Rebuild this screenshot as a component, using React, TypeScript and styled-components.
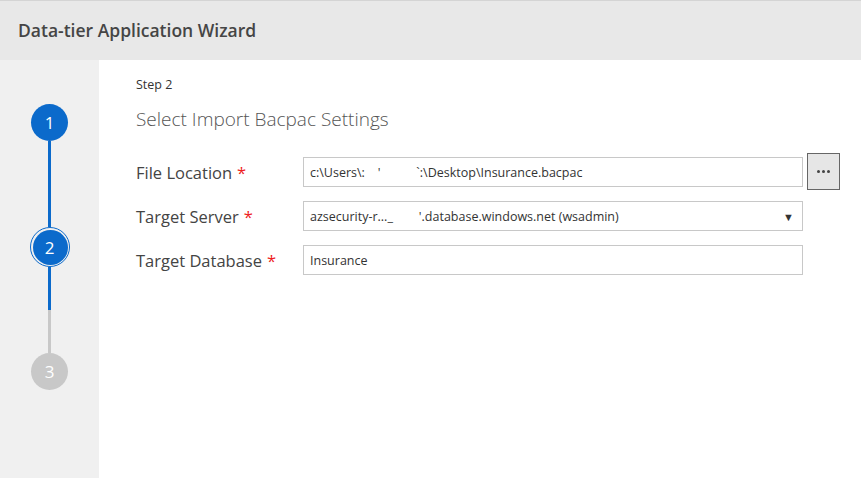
import React from "react";
import styled, { createGlobalStyle } from "styled-components";

const GlobalStyle = createGlobalStyle`
  html, body { margin: 0; padding: 0; background: #ffffff; }
  body { font-family: "Open Sans", "Noto Sans", sans-serif; }
  * { box-sizing: border-box; }
`;

const BLUE = "#0b6acb";
const GREY = "#c8c8c8";

const Page = styled.div`
  width: 861px;
  height: 478px;
  display: flex;
  flex-direction: column;
  background: #ffffff;
  overflow: hidden;
`;

const Header = styled.header`
  height: 60px;
  flex: none;
  border-top: 1px solid #d4d4d4;
  background: #e8e8e8;
  display: flex;
  align-items: center;
  padding: 0 0 1px 18px;
  font-size: 17.5px;
  font-weight: 600;
  color: #454545;
`;

const Body = styled.div`
  flex: 1;
  display: flex;
  min-height: 0;
`;

const Sidebar = styled.nav`
  width: 99px;
  flex: none;
  background: #f0f0f0;
  display: flex;
  flex-direction: column;
  align-items: center;
  padding-top: 44px;
`;

const Circle = styled.div<{ $state: "done" | "active" | "todo" }>`
  flex: none;
  width: ${(p) => (p.$state === "active" ? 40 : 37)}px;
  height: ${(p) => (p.$state === "active" ? 40 : 37)}px;
  border-radius: 50%;
  display: flex;
  align-items: center;
  justify-content: center;
  color: #ffffff;
  font-size: 17px;
  background: ${(p) => (p.$state === "todo" ? GREY : BLUE)};
  ${(p) =>
    p.$state === "active" &&
    `
    border: 1px solid ${BLUE};
    padding: 1.5px;
    background-clip: content-box;
  `}
`;

const Connector = styled.div<{ $h: number; $on: boolean }>`
  flex: none;
  width: 3px;
  height: ${(p) => p.$h}px;
  background: ${(p) => (p.$on ? BLUE : GREY)};
`;

const Main = styled.main`
  flex: 1;
  padding: 16px 0 0 37px;
  display: flex;
  flex-direction: column;
`;

const StepLabel = styled.div`
  font-size: 12.5px;
  line-height: 18px;
  color: #333333;
`;

const Title = styled.h1`
  margin: 12px 0 0;
  font-size: 19px;
  line-height: 26px;
  font-weight: 300;
  color: #555555;
`;

const Form = styled.div`
  margin-top: 25px;
  display: grid;
  grid-template-columns: 167px 500px auto;
  grid-auto-rows: 30px;
  row-gap: 14px;
  align-items: center;
`;

const Label = styled.label`
  font-size: 16.5px;
  color: #444444;
  white-space: nowrap;
`;

const Required = styled.span`
  color: #ee1c1c;
  margin-left: 5px;
`;

const Field = styled.div`
  height: 30px;
  border: 1px solid #c8c8c8;
  background: #ffffff;
  display: flex;
  align-items: center;
  padding: 0 8px 0 6px;
  font-size: 12.5px;
  color: #333333;
  white-space: pre;
`;

const FieldText = styled.span`
  flex: 1;
  overflow: hidden;
`;

const Arrow = styled.span`
  font-size: 11px;
  color: #333333;
`;

const BrowseButton = styled.button`
  margin: -4px 0 -3px 4px;
  width: 33px;
  height: 37px;
  border: 1px solid #666666;
  background: #e6e6e6;
  padding: 0;
  display: flex;
  align-items: center;
  justify-content: center;
  gap: 2px;
`;

const Dot = styled.span`
  width: 3px;
  height: 3px;
  border-radius: 50%;
  background: #444444;
`;

export default function App() {
  return (
    <>
      <GlobalStyle />
      <Page>
        <Header>Data-tier Application Wizard</Header>
        <Body>
          <Sidebar>
            <Circle $state="done">1</Circle>
            <Connector $h={86} $on />
            <Circle $state="active">2</Circle>
            <Connector $h={43} $on />
            <Connector $h={43} $on={false} />
            <Circle $state="todo">3</Circle>
          </Sidebar>
          <Main>
            <StepLabel>Step 2</StepLabel>
            <Title>Select Import Bacpac Settings</Title>
            <Form>
              <Label>
                File Location<Required>*</Required>
              </Label>
              <Field>
                <FieldText>{"c:\\Users\\:    '           `:\\Desktop\\Insurance.bacpac"}</FieldText>
              </Field>
              <BrowseButton aria-label="Browse">
                <Dot />
                <Dot />
                <Dot />
              </BrowseButton>

              <Label>
                Target Server<Required>*</Required>
              </Label>
              <Field>
                <FieldText>{"azsecurity-r..._        '.database.windows.net (wsadmin)"}</FieldText>
                <Arrow>▼</Arrow>
              </Field>
              <span />

              <Label>
                Target Database<Required>*</Required>
              </Label>
              <Field>
                <FieldText>Insurance</FieldText>
              </Field>
              <span />
            </Form>
          </Main>
        </Body>
      </Page>
    </>
  );
}
